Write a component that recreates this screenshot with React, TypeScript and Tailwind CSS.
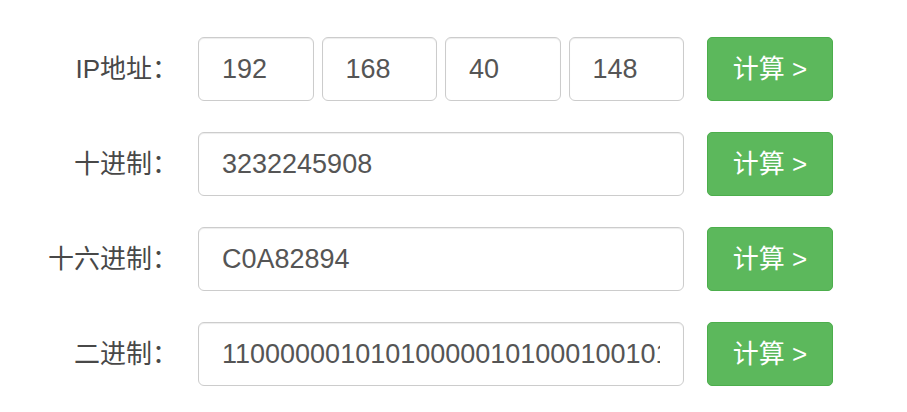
import React, { useState } from 'react';

const inputCls =
  'w-full h-[64px] rounded-[6px] border border-[#ccc] bg-white px-[23px] text-[27px] text-[#555] shadow-[inset_0_1px_1px_rgba(0,0,0,0.075)] outline-none';

const Row: React.FC<{ label: string; children: React.ReactNode }> = ({ label, children }) => (
  <div className="flex items-center">
    <label className="w-[178px] text-right text-[26px] text-[#484848] leading-none">{label}</label>
    <div className="ml-[20px] w-[486px]">{children}</div>
    <button className="ml-[23px] h-[64px] w-[126px] rounded-[5px] border border-[#4cae4c] bg-[#5cb85c] text-[26px] text-white">
      计算 &gt;
    </button>
  </div>
);

const App: React.FC = () => {
  const [ip] = useState(['192', '168', '40', '148']);
  const num = ip.reduce((acc, p) => acc * 256 + Number(p), 0);
  const dec = String(num);
  const hex = num.toString(16).toUpperCase();
  const bin = num.toString(2);

  return (
    <div
      className="h-[412px] w-[907px] bg-white pt-[37px]"
      style={{ fontFamily: '"Liberation Sans", Arial, "Noto Sans CJK SC", sans-serif' }}
    >
      <div className="flex flex-col gap-[31px]">
        <Row label="IP地址：">
          <div className="grid grid-cols-4 gap-[8px]">
            {ip.map((p, i) => (
              <input key={i} className={inputCls} defaultValue={p} />
            ))}
          </div>
        </Row>
        <Row label="十进制：">
          <input className={inputCls} defaultValue={dec} />
        </Row>
        <Row label="十六进制：">
          <input className={inputCls} defaultValue={hex} />
        </Row>
        <Row label="二进制：">
          <input className={inputCls} defaultValue={bin} />
        </Row>
      </div>
    </div>
  );
};

export default App;
